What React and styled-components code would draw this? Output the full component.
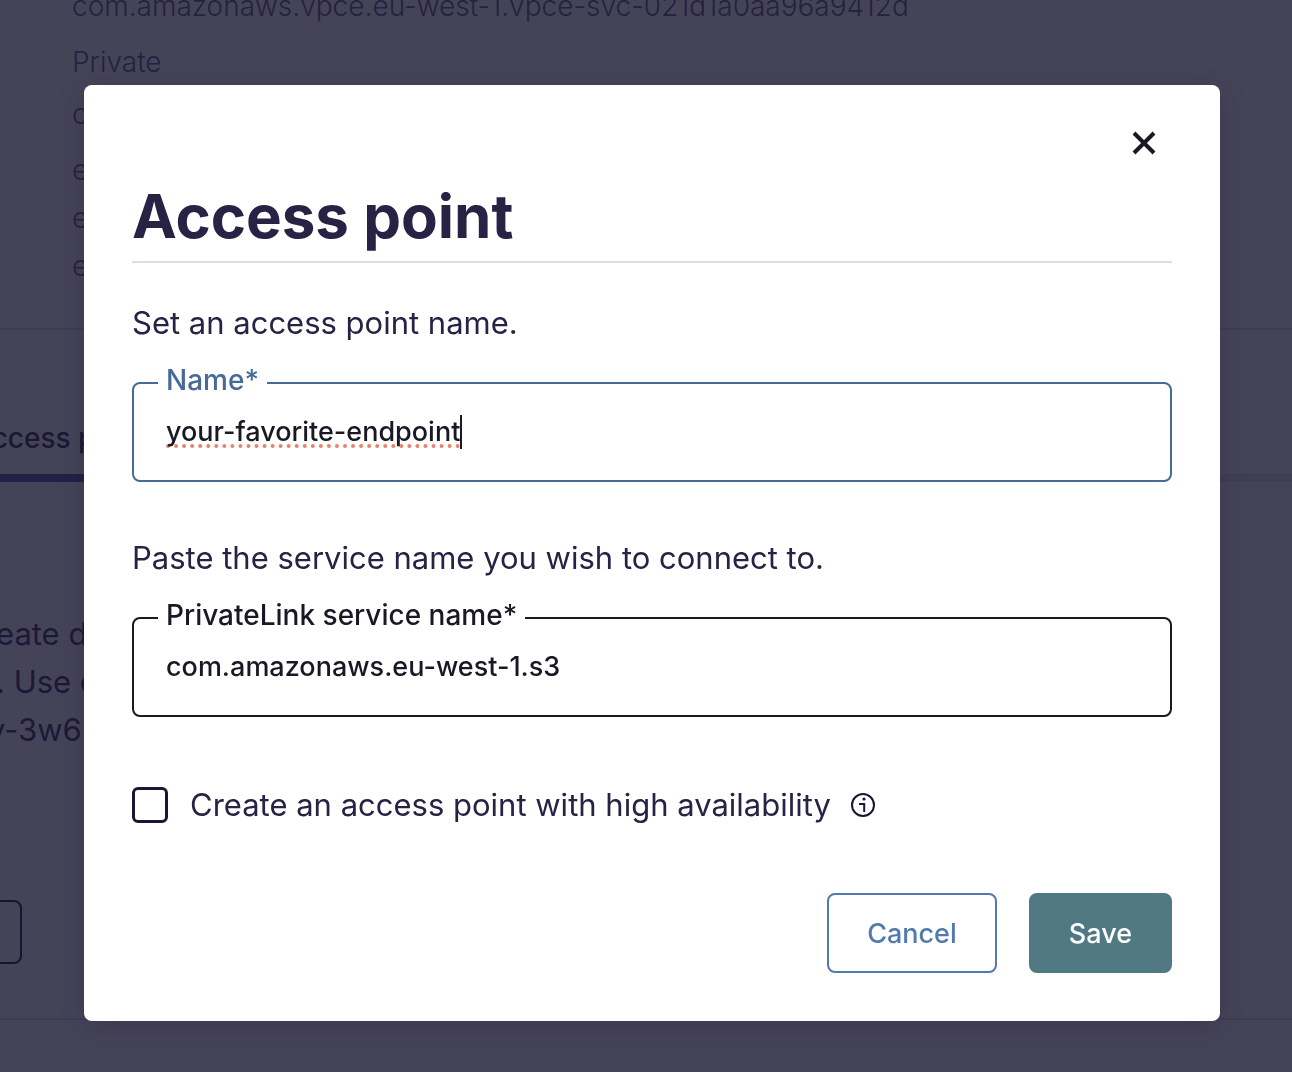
import React, { useState } from 'react';
import styled, { createGlobalStyle } from 'styled-components';

const GlobalStyle = createGlobalStyle`
  *, *::before, *::after { box-sizing: border-box; }
  body {
    margin: 0;
    background: #fff;
    color: #262344;
    font-family: Inter, "Liberation Sans", sans-serif;
    -webkit-font-smoothing: antialiased;
  }
  button, input { font: inherit; }
`;

const Page = styled.main`
  height: 100vh;
  overflow: hidden;
`;

const Details = styled.section`
  display: flex;
  flex-direction: column;
  height: 330px;
  padding: 0 72px;
  border-bottom: 2px solid #dcdbe2;
`;

const Detail = styled.p`
  margin: 0;
  font-size: 28px;
  font-weight: 300;
  line-height: ${(p) => (p.$tight ? 48 : 56)}px;
  color: #5d5985;
  white-space: nowrap;

  ${Details} > &:first-child { margin-top: -22px; }
`;

const Endpoints = styled.div`
  display: flex;
  flex-direction: column;
  margin-top: 8px;
`;

const Tabs = styled.nav`
  display: flex;
  height: 152px;
  align-items: flex-end;
  border-bottom: 8px solid #dde3f0;
`;

const Tab = styled.a`
  width: 240px;
  height: 80px;
  margin: 0 0 -8px -28px;
  padding-top: 18px;
  border-bottom: 8px solid #4b5a9c;
  color: #2b2950;
  font-size: 28px;
  font-weight: 500;
  line-height: 36px;
  text-decoration: none;
`;

const Body = styled.section`
  height: 538px;
  padding-top: 128px;
  border-bottom: 2px solid #dcdbe2;
`;

const Copy = styled.p`
  margin: 0;
  font-size: 31px;
  line-height: 48px;
  color: #34315e;
  white-space: nowrap;
`;

const Line = styled.span`
  display: block;
  text-indent: -${(p) => p.$cut}px;
`;

const PageButton = styled.button`
  display: block;
  width: 182px;
  height: 64px;
  margin: 146px 0 0 -160px;
  border: 2px solid #1a1830;
  border-radius: 8px;
  background: none;
`;

const Overlay = styled.div`
  position: fixed;
  inset: 0;
  display: flex;
  align-items: flex-start;
  padding: 85px 72px 51px 84px;
  background: rgba(23, 20, 46, 0.8);
  overflow: auto;
`;

const Dialog = styled.form`
  display: flex;
  flex: 1;
  min-width: 0;
  flex-direction: column;
  padding: 30px 48px 48px;
  border-radius: 8px;
  background: #fff;
  box-shadow: 0 6px 24px rgba(30, 28, 56, 0.25);
`;

const CloseButton = styled.button`
  display: grid;
  place-items: center;
  align-self: flex-end;
  width: 56px;
  height: 56px;
  padding: 0;
  border: 0;
  background: none;
  color: #1a1824;
  cursor: pointer;
`;

const Title = styled.h1`
  margin: 0;
  border-bottom: 2px solid #dfdee5;
  font-size: 60px;
  font-weight: 700;
  line-height: 90px;
`;

const Hint = styled.p`
  margin: ${(p) => (p.$first ? 36 : 52)}px 0 19px;
  font-size: 31px;
  line-height: 48px;
`;

const Field = styled.fieldset`
  display: block;
  min-width: 0;
  margin: 0;
  padding: 0 32px 16px;
  border: 2px solid ${(p) => (p.$active ? '#476a96' : '#1a1824')};
  border-radius: 8px;
`;

const Legend = styled.legend`
  margin-left: -8px;
  padding: 0 8px 6px;
  color: ${(p) => (p.$active ? '#476a96' : '#1a1824')};
  font-size: 28px;
  font-weight: 500;
  line-height: 28px;
`;

const InputRow = styled.label`
  display: flex;
  align-items: center;
  height: 64px;
  cursor: text;
`;

const Input = styled.input`
  height: 48px;
  padding: 0;
  border: 0;
  outline: 0;
  background: none;
  color: #1a1824;
  font-size: 27px;
  font-weight: 500;
  line-height: 48px;
  ${(p) =>
    p.$flagged
      ? `field-sizing: content;
         text-decoration: underline dotted #e5836c 4px;
         text-decoration-skip-ink: none;
         text-underline-offset: 3px;`
      : 'width: 100%;'}
`;

const Caret = styled.span`
  width: 2px;
  height: 34px;
  background: #1a1824;
`;

const Option = styled.div`
  display: flex;
  align-items: center;
  margin-top: 64px;
  line-height: 48px;
  font-size: 31px;
`;

const Checkbox = styled.input`
  appearance: none;
  width: 36px;
  height: 36px;
  margin: 0 22px 0 0;
  border: 3px solid #1a1633;
  border-radius: 6px;
  background: #fff;

  &:checked { background: #1a1633; }
`;

const InfoButton = styled.button`
  display: flex;
  margin-left: 20px;
  padding: 0;
  border: 0;
  background: none;
  color: #1a1633;
`;

const Actions = styled.div`
  display: flex;
  justify-content: flex-end;
  gap: 32px;
  margin-top: 64px;
`;

const Button = styled.button`
  height: 80px;
  padding: 0 38px;
  border: 2px solid ${(p) => (p.$primary ? '#507984' : '#517bae')};
  border-radius: 8px;
  background: ${(p) => (p.$primary ? '#507984' : '#fff')};
  color: ${(p) => (p.$primary ? '#fff' : '#517bae')};
  font-size: 27px;
  font-weight: 500;
  cursor: pointer;
`;

function TextField({ id, label, value, onChange, active }) {
  return (
    <Field $active={active}>
      <Legend $active={active}>
        <label htmlFor={id}>{label}</label>
      </Legend>
      <InputRow htmlFor={id}>
        <Input
          id={id}
          type="text"
          value={value}
          spellCheck={false}
          $flagged={active}
          onChange={(e) => onChange(e.target.value)}
        />
        {active && <Caret />}
      </InputRow>
    </Field>
  );
}

function CloseIcon() {
  return (
    <svg width="24" height="24" viewBox="0 0 24 24" fill="none" stroke="currentColor" strokeWidth="4" aria-hidden="true">
      <path d="M2 2 22 22M22 2 2 22" />
    </svg>
  );
}

function InfoIcon() {
  return (
    <svg width="24" height="24" viewBox="0 0 24 24" fill="none" stroke="currentColor" strokeWidth="2" aria-hidden="true">
      <circle cx="12" cy="12" r="11" />
      <path d="M8 11h5.2v8" />
      <circle cx="13" cy="6" r="1.6" fill="currentColor" stroke="none" />
    </svg>
  );
}

export default function App() {
  const [name, setName] = useState('your-favorite-endpoint');
  const [service, setService] = useState('com.amazonaws.eu-west-1.s3');

  return (
    <>
      <GlobalStyle />
      <Page aria-hidden="true">
        <Details>
          <Detail>com.amazonaws.vpce.eu-west-1.vpce-svc-021d1a0aa96a9412d</Detail>
          <Detail>Private</Detail>
          <Detail $tight>c</Detail>
          <Endpoints>
            <Detail $tight>e</Detail>
            <Detail $tight>e</Detail>
            <Detail $tight>e</Detail>
          </Endpoints>
        </Details>
        <Tabs>
          <Tab href="#access">Access p</Tab>
        </Tabs>
        <Body>
          <Copy>
            <Line $cut={4}>eate d</Line>
            <Line $cut={4}>. Use e</Line>
            <Line $cut={12}>y-3w6</Line>
          </Copy>
          <PageButton type="button" tabIndex={-1} />
        </Body>
      </Page>
      <Overlay>
        <Dialog role="dialog" aria-labelledby="dialog-title" onSubmit={(e) => e.preventDefault()}>
          <CloseButton type="button" aria-label="Close">
            <CloseIcon />
          </CloseButton>
          <Title id="dialog-title">Access point</Title>
          <Hint $first>Set an access point name.</Hint>
          <TextField id="name" label="Name*" value={name} onChange={setName} active />
          <Hint>Paste the service name you wish to connect to.</Hint>
          <TextField id="service" label="PrivateLink service name*" value={service} onChange={setService} />
          <Option>
            <Checkbox type="checkbox" id="ha" />
            <label htmlFor="ha">Create an access point with high availability</label>
            <InfoButton type="button" aria-label="About high availability">
              <InfoIcon />
            </InfoButton>
          </Option>
          <Actions>
            <Button type="button">Cancel</Button>
            <Button type="submit" $primary>Save</Button>
          </Actions>
        </Dialog>
      </Overlay>
    </>
  );
}
